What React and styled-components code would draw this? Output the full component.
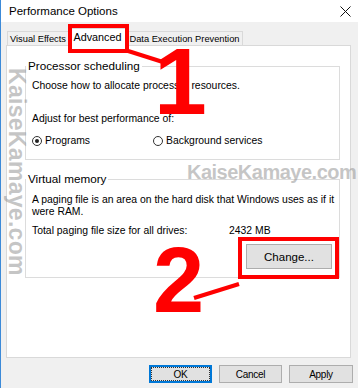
import React from "react";
import styled, { createGlobalStyle } from "styled-components";

const Global = createGlobalStyle`
  html, body { margin: 0; padding: 0; background: #f0f0f0; }
  body { font-family: "Liberation Sans", Arial, sans-serif; color: #000; }
  * { box-sizing: border-box; }
`;

const Window = styled.div`
  position: relative;
  width: 358px;
  height: 388px;
  border-left: 1px solid #3c8ad8;
  background: #f0f0f0;
  display: flex;
  flex-direction: column;
  overflow: hidden;
`;

const TitleBar = styled.div`
  height: 22px;
  background: #fff;
  display: flex;
  align-items: center;
  justify-content: space-between;
  padding: 0 7px 0 8px;
  font-size: 11.5px;
`;

const CloseIcon = styled.svg`
  width: 11px;
  height: 11px;
  display: block;
`;

const TabRow = styled.div`
  margin-top: 6px;
  height: 17px;
  display: flex;
  align-items: flex-end;
  padding-left: 6px;
`;

const Tab = styled.div`
  width: ${(p) => p.$w}px;
  display: flex;
  align-items: center;
  justify-content: center;
  border: 1px solid #d9d9d9;
  border-bottom: none;
  background: ${(p) => (p.$active ? "#fff" : "#f0f0f0")};
  height: ${(p) => (p.$active ? 18 : 14)}px;
  margin-bottom: ${(p) => (p.$active ? -1 : 0)}px;
  position: relative;
  z-index: ${(p) => (p.$active ? 2 : 1)};
  font-size: ${(p) => (p.$active ? 10.8 : 9.3)}px;
  line-height: 12px;
  padding-bottom: ${(p) => (p.$active ? 2 : 0)}px;
  white-space: nowrap;
`;

const Panel = styled.div`
  margin: 0 7px 0 5px;
  height: 313px;
  background: #fff;
  border: 1px solid #d9d9d9;
  padding: 13px 10px 0 18px;
  display: flex;
  flex-direction: column;
`;

const Group = styled.fieldset`
  margin: ${(p) => p.$mt || 0}px 0 0 0;
  border: 1px solid #dcdcdc;
  padding: 0 7px ${(p) => p.$pb}px 6px;
  min-width: 0;
  display: flex;
  flex-direction: column;
`;

const Legend = styled.legend`
  font-size: 11.7px;
  line-height: 14px;
  padding: 0 2px;
  margin-left: -6px;
`;

const Text = styled.p`
  margin: ${(p) => p.$mt}px 0 0 0;
  font-size: 10.4px;
  line-height: ${(p) => p.$lh || 14}px;
  white-space: nowrap;
`;

const RadioRow = styled.div`
  margin-top: 8px;
  height: 14px;
  display: grid;
  grid-template-columns: 121px auto;
  align-items: center;
`;

const RadioOption = styled.label`
  display: flex;
  align-items: center;
  gap: 3px;
  font-size: 10.4px;
  line-height: 14px;
`;

const RadioCircle = styled.span`
  width: 10px;
  height: 10px;
  border-radius: 50%;
  border: 1px solid #333;
  background: #fff;
  display: flex;
  align-items: center;
  justify-content: center;
  &::after {
    content: "";
    width: 4px;
    height: 4px;
    border-radius: 50%;
    background: ${(p) => (p.$checked ? "#222" : "transparent")};
  }
`;

const SizeRow = styled.div`
  margin-top: 7px;
  display: flex;
  font-size: 10.4px;
  line-height: 12px;
`;

const SizeLabel = styled.span`
  width: 197px;
`;

const ChangeButton = styled.button`
  align-self: flex-end;
  margin-top: 7px;
  width: 86px;
  height: 25px;
  border: 1px solid #adadad;
  background: #e1e1e1;
  font-family: inherit;
  font-size: 11.5px;
  color: #000;
  padding: 0;
`;

const ButtonRow = styled.div`
  margin-top: 7px;
  display: flex;
  justify-content: flex-end;
  gap: 7px;
  padding-right: 5px;
`;

const DialogButton = styled.button`
  width: ${(p) => p.$w}px;
  height: 18px;
  padding: 0;
  font-family: inherit;
  font-size: 10px;
  letter-spacing: -0.3px;
  color: #000;
  background: #e1e1e1;
  border: 1px solid ${(p) => (p.$default ? "#0078d7" : "#adadad")};
  outline: ${(p) => (p.$default ? "1px dotted #333" : "none")};
  outline-offset: -3px;
  box-shadow: ${(p) => (p.$default ? "inset 0 0 0 1px #0078d7" : "none")};
`;

const Annotations = styled.svg`
  position: absolute;
  left: 0;
  top: 0;
  width: 358px;
  height: 388px;
  pointer-events: none;
  z-index: 5;
`;

const Digit = styled.div`
  position: absolute;
  left: ${(p) => p.$x}px;
  top: ${(p) => p.$y}px;
  font-family: "Liberation Sans", Arial, sans-serif;
  font-weight: bold;
  font-size: ${(p) => p.$size}px;
  line-height: 1;
  color: #ff0000;
  z-index: 6;
  pointer-events: none;
`;

const Watermark = styled.div`
  position: absolute;
  left: ${(p) => p.$x}px;
  top: ${(p) => p.$y}px;
  font-family: "Liberation Sans", Arial, sans-serif;
  font-weight: bold;
  font-size: ${(p) => p.$size}px;
  letter-spacing: ${(p) => p.$ls}px;
  line-height: 1;
  color: rgba(140, 140, 140, 0.5);
  writing-mode: ${(p) => (p.$vertical ? "vertical-rl" : "horizontal-tb")};
  white-space: nowrap;
  z-index: 4;
  pointer-events: none;
`;

export default function App() {
  return (
    <>
      <Global />
      <Window>
        <TitleBar>
          <span>Performance Options</span>
          <CloseIcon viewBox="0 0 11 11">
            <path d="M0.5 0.5 L10.5 10.5 M10.5 0.5 L0.5 10.5" stroke="#111" strokeWidth="1" />
          </CloseIcon>
        </TitleBar>
        <TabRow>
          <Tab $w={62}>Visual Effects</Tab>
          <Tab $w={57} $active>Advanced</Tab>
          <Tab $w={117}>Data Execution Prevention</Tab>
        </TabRow>
        <Panel>
          <Group $pb={11}>
            <Legend>Processor scheduling</Legend>
            <Text $mt={6}>Choose how to allocate processor resources.</Text>
            <Text $mt={19}>Adjust for best performance of:</Text>
            <RadioRow>
              <RadioOption>
                <RadioCircle $checked />
                Programs
              </RadioOption>
              <RadioOption>
                <RadioCircle />
                Background services
              </RadioOption>
            </RadioRow>
          </Group>
          <Group $mt={12} $pb={8}>
            <Legend>Virtual memory</Legend>
            <Text $mt={8} $lh={12}>
              A paging file is an area on the hard disk that Windows uses as if it
              <br />
              were RAM.
            </Text>
            <SizeRow>
              <SizeLabel>Total paging file size for all drives:</SizeLabel>
              <span>2432 MB</span>
            </SizeRow>
            <ChangeButton>Change...</ChangeButton>
          </Group>
        </Panel>
        <ButtonRow>
          <DialogButton $w={63} $default>OK</DialogButton>
          <DialogButton $w={63}>Cancel</DialogButton>
          <DialogButton $w={64}>Apply</DialogButton>
        </ButtonRow>

        <Watermark $x={4} $y={68} $size={23} $ls={0.3} $vertical>KaiseKamaye.com</Watermark>
        <Watermark $x={186} $y={162} $size={20} $ls={-0.5}>KaiseKamaye.com</Watermark>

        <Annotations viewBox="0 0 358 388">
          <rect x="69" y="26" width="57" height="25" fill="none" stroke="#ff0000" strokeWidth="4" />
          <line x1="124" y1="50" x2="165" y2="63" stroke="#ff0000" strokeWidth="4" />
          <rect x="239" y="239" width="97" height="38" fill="none" stroke="#ff0000" strokeWidth="4" />
          <line x1="193" y1="298" x2="238" y2="284" stroke="#ff0000" strokeWidth="4" />
        </Annotations>
        <Digit $x={153} $y={34} $size={95}>1</Digit>
        <Digit $x={152} $y={234} $size={92}>2</Digit>
      </Window>
    </>
  );
}
